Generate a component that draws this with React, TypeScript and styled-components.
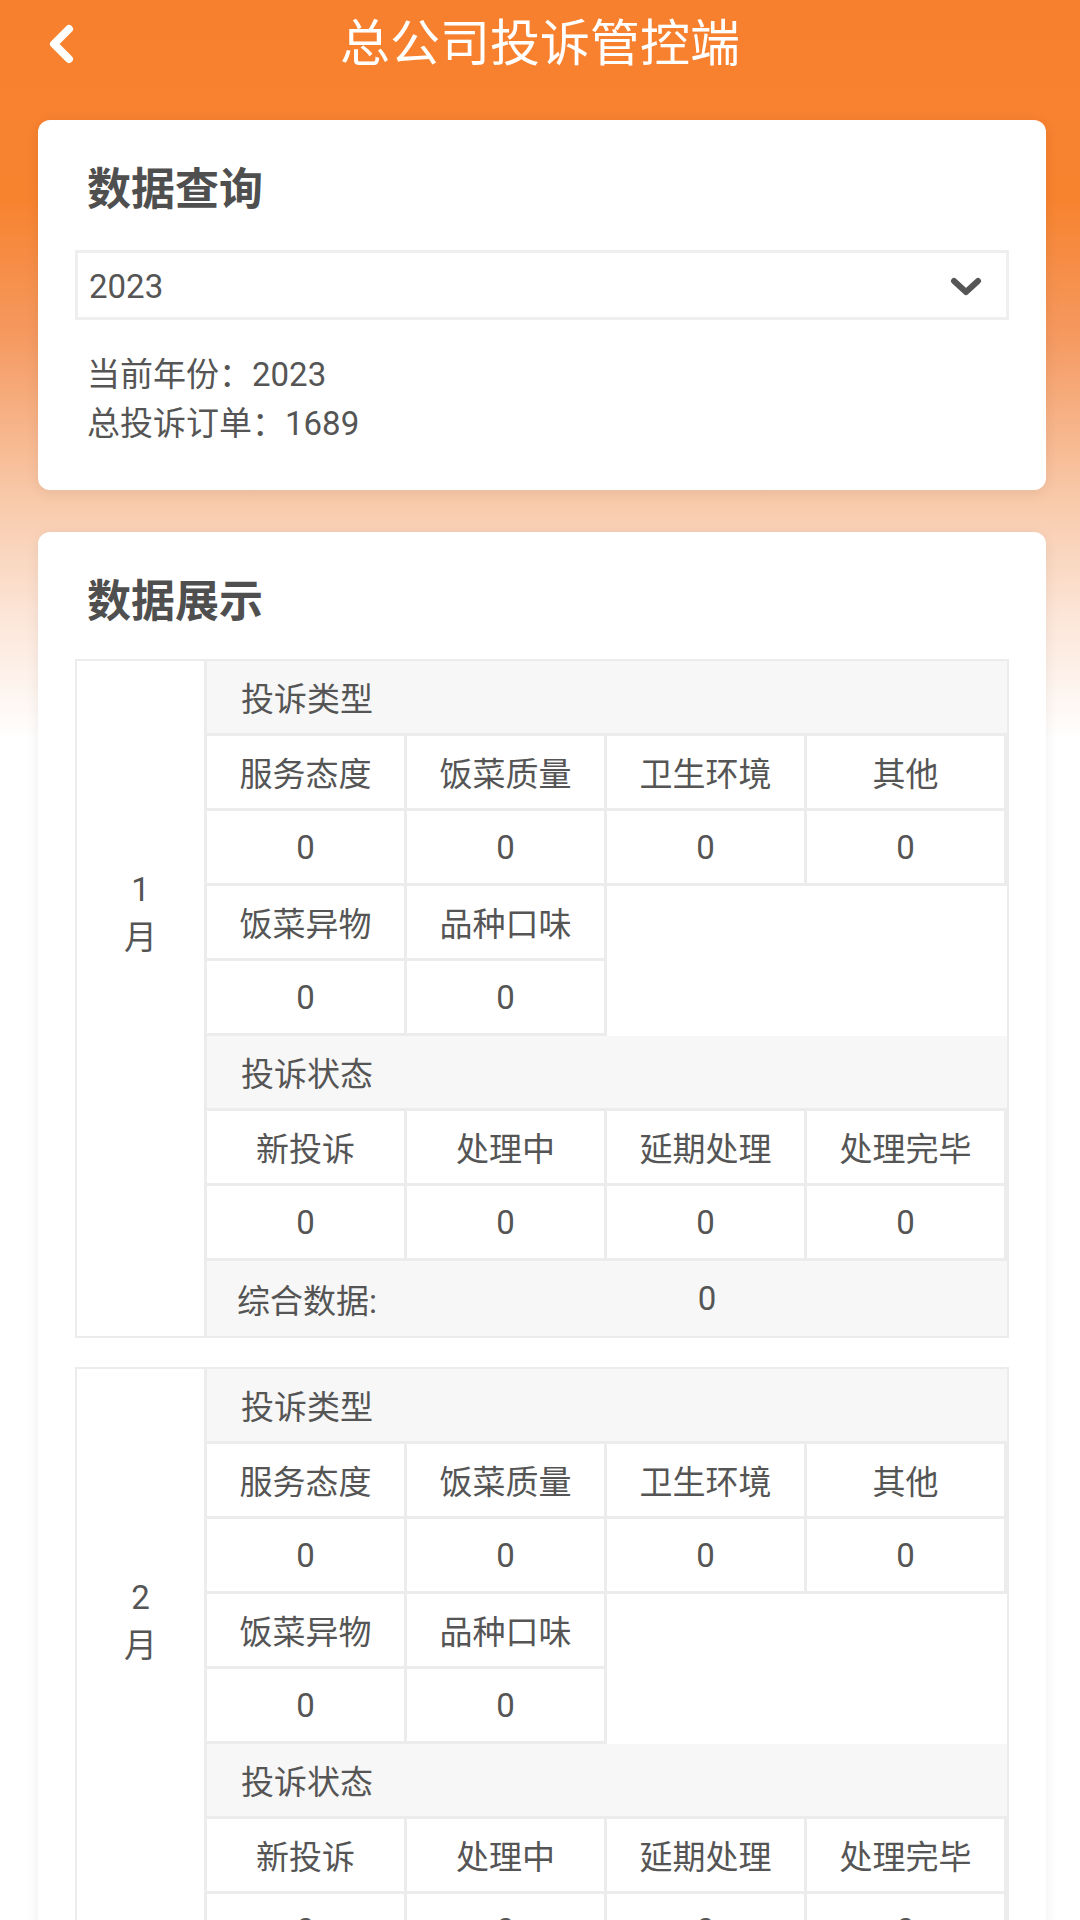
import React from 'react';
import styled, { createGlobalStyle } from 'styled-components';

const GlobalStyle = createGlobalStyle`
	html, body {
		margin: 0;
		padding: 0;
		background: #fff;
	}
	* {
		box-sizing: border-box;
	}
`;

const TYPE_LABELS = ['服务态度', '饭菜质量', '卫生环境', '其他'];
const EXTRA_LABELS = ['饭菜异物', '品种口味'];
const STATUS_LABELS = ['新投诉', '处理中', '延期处理', '处理完毕'];

const months = Array.from({ length: 12 }, (_, i) => ({
	month: i + 1,
	types: [0, 0, 0, 0],
	extra: [0, 0],
	status: [0, 0, 0, 0],
	total: 0,
}));

const BackIcon = () => (
	<svg width="40" height="44" viewBox="0 0 40 44">
		<polyline
			points="24,6 9,21 24,36"
			fill="none"
			stroke="#fff"
			strokeWidth="8"
			strokeLinecap="round"
			strokeLinejoin="round"
		/>
	</svg>
);

const ChevronDown = () => (
	<svg width="32" height="20" viewBox="0 0 32 20">
		<polyline
			points="4,4 16,15 28,4"
			fill="none"
			stroke="#555"
			strokeWidth="6"
			strokeLinecap="round"
			strokeLinejoin="round"
		/>
	</svg>
);

const MonthTable = ({ data }: { data: (typeof months)[number] }) => (
	<Table>
		<MonthCol>
			<MonthLabel>{data.month}月</MonthLabel>
		</MonthCol>
		<TableBody>
			<SectionHead>
				<HeadLabel>投诉类型</HeadLabel>
			</SectionHead>
			<CellRow>
				{TYPE_LABELS.map((l) => (
					<Cell key={l}>{l}</Cell>
				))}
			</CellRow>
			<CellRow>
				{data.types.map((v, i) => (
					<Cell key={i}>{v}</Cell>
				))}
			</CellRow>
			<CellRow>
				{EXTRA_LABELS.map((l) => (
					<Cell key={l}>{l}</Cell>
				))}
			</CellRow>
			<CellRow>
				{data.extra.map((v, i) => (
					<Cell key={i}>{v}</Cell>
				))}
			</CellRow>
			<SectionHead>
				<HeadLabel>投诉状态</HeadLabel>
			</SectionHead>
			<CellRow>
				{STATUS_LABELS.map((l) => (
					<Cell key={l}>{l}</Cell>
				))}
			</CellRow>
			<CellRow>
				{data.status.map((v, i) => (
					<Cell key={i}>{v}</Cell>
				))}
			</CellRow>
			<SectionHead $last>
				<HeadLabel>综合数据:</HeadLabel>
				<TotalValue>{data.total}</TotalValue>
			</SectionHead>
		</TableBody>
	</Table>
);

const App = () => {
	return (
		<Page>
			<GlobalStyle />
			<Header>
				<BackButton>
					<BackIcon />
				</BackButton>
				<Title>总公司投诉管控端</Title>
			</Header>
			<Card>
				<CardTitle>数据查询</CardTitle>
				<Select>
					<span>2023</span>
					<ChevronDown />
				</Select>
				<InfoLines>
					<InfoLine>当前年份：2023</InfoLine>
					<InfoLine>总投诉订单：1689</InfoLine>
				</InfoLines>
			</Card>
			<Card>
				<CardTitle $tight>数据展示</CardTitle>
				<Tables>
					{months.map((m) => (
						<MonthTable key={m.month} data={m} />
					))}
				</Tables>
			</Card>
		</Page>
	);
};

const Page = styled.div`
	width: 1080px;
	min-height: 1920px;
	padding: 0 34px 40px 38px;
	font-family: Roboto, 'Noto Sans CJK SC', sans-serif;
	color: #555;
	background: linear-gradient(
		to bottom,
		#f7802f 0px,
		#f7832f 200px,
		#f59a62 340px,
		#f8c7a6 490px,
		#fce6d9 620px,
		#fff 740px
	);
	display: flex;
	flex-direction: column;
	gap: 42px;
`;

const Header = styled.header`
	height: 88px;
	margin: 0 -34px -10px -38px;
	display: grid;
	grid-template-columns: 120px 1fr 120px;
	align-items: center;
`;

const BackButton = styled.div`
	display: flex;
	align-items: center;
	padding-left: 45px;
	padding-top: 2px;
`;

const Title = styled.h1`
	margin: 0;
	text-align: center;
	font-size: 50px;
	font-weight: 400;
	color: #fff;
	line-height: 88px;
`;

const Card = styled.section`
	background: #fff;
	border-radius: 12px;
	box-shadow: 0 3px 14px rgba(0, 0, 0, 0.07);
	padding: 40px 37px 42px;
`;

const CardTitle = styled.h2<{ $tight?: boolean }>`
	margin: 0 0 ${(p) => (p.$tight ? 27 : 30)}px 12px;
	font-size: 44px;
	line-height: 60px;
	font-weight: 700;
	color: #4f4f4f;
`;

const Select = styled.div`
	height: 70px;
	border: 3px solid #efefef;
	display: flex;
	align-items: center;
	justify-content: space-between;
	padding: 3px 24px 0 11px;
	font-size: 33px;
	color: #555;
`;

const InfoLines = styled.div`
	margin-top: 30px;
	padding-left: 12px;
`;

const InfoLine = styled.div`
	font-size: 33px;
	line-height: 49px;
	color: #555;
`;

const Tables = styled.div`
	display: flex;
	flex-direction: column;
	gap: 29px;
`;

const Table = styled.div`
	display: flex;
	border: 2px solid #ececec;
`;

const MonthCol = styled.div`
	width: 130px;
	flex-shrink: 0;
	border-right: 3px solid #ececec;
	display: flex;
	justify-content: center;
	padding-top: 205px;
`;

const MonthLabel = styled.div`
	width: 36px;
	text-align: center;
	word-break: break-all;
	font-size: 33px;
	line-height: 48px;
`;

const TableBody = styled.div`
	flex: 1;
	display: flex;
	flex-direction: column;
`;

const SectionHead = styled.div<{ $last?: boolean }>`
	height: 75px;
	display: grid;
	grid-template-columns: 1fr 3fr;
	align-items: center;
	background: #f7f7f7;
	border-bottom: ${(p) => (p.$last ? 'none' : '3px solid #ececec')};
	font-size: 33px;
`;

const HeadLabel = styled.div`
	text-align: center;
`;

const TotalValue = styled.div`
	text-align: center;
`;

const CellRow = styled.div`
	display: grid;
	grid-template-columns: repeat(4, 1fr);
	height: 75px;
`;

const Cell = styled.div`
	display: flex;
	align-items: center;
	justify-content: center;
	border-right: 3px solid #ececec;
	border-bottom: 3px solid #ececec;
	font-size: 33px;
	color: #555;
`;

export default App;
